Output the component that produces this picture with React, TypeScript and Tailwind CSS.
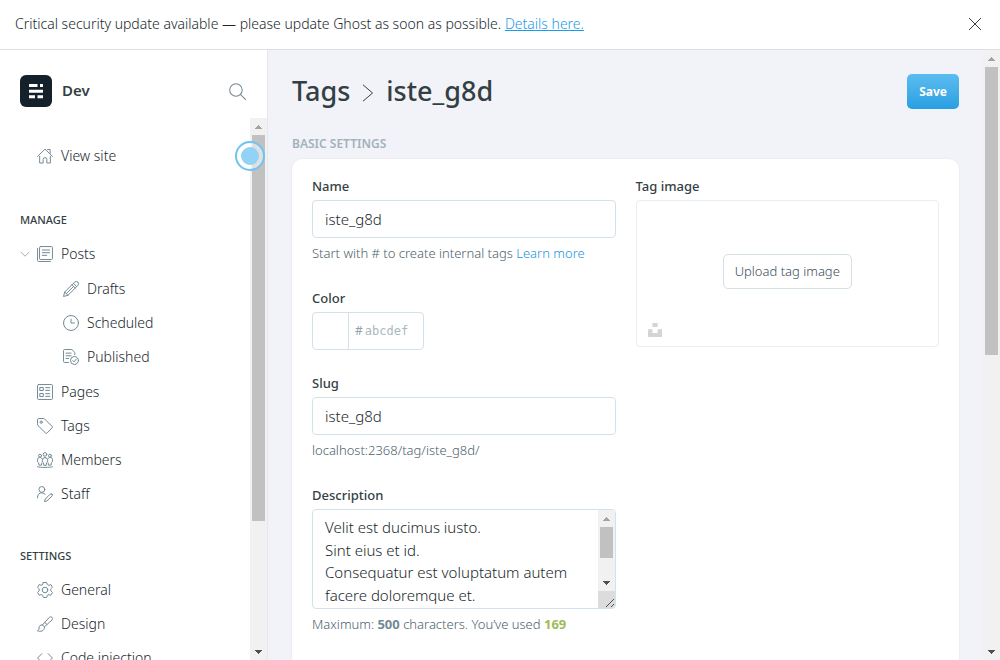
import React from 'react';
import type { ReactNode } from 'react';

function Icon({ children, className = 'size-4' }: { children: ReactNode; className?: string }) {
  return (
    <svg
      viewBox="0 0 24 24"
      fill="none"
      stroke="currentColor"
      strokeWidth="1.5"
      strokeLinecap="round"
      strokeLinejoin="round"
      aria-hidden="true"
      className={`shrink-0 text-[#738a94] ${className}`}
    >
      {children}
    </svg>
  );
}

const icons = {
  home: (
    <>
      <path d="M0.8 12.8 12 1.6l11.2 11.2" />
      <path d="M4 12.5v10h5.2v-5.2a2.8 2.8 0 0 1 5.6 0v5.2H20v-10" />
      <path d="M15.8 2.2h3.9v6" />
    </>
  ),
  posts: (
    <>
      <rect x="3.8" y="0.8" width="19.4" height="19.4" rx="1.5" />
      <path d="M0.8 3.8v17.9a1.5 1.5 0 0 0 1.5 1.5h17.9" />
      <path d="M8 6h11M8 10h11M8 14h6.5" />
    </>
  ),
  pencil: (
    <>
      <path d="M22.2 1.8a3.4 3.4 0 0 0-4.9 0L2.6 16.5 0.8 23.2l6.7-1.8L22.2 6.7a3.4 3.4 0 0 0 0-4.9Z" />
      <path d="m15.6 3.5 4.9 4.9M13.4 5.7l4.9 4.9M2.6 16.5l4.9 4.9M5 18.9 16 8" />
    </>
  ),
  clock: (
    <>
      <circle cx="12" cy="12" r="11.2" />
      <path d="M12 6.2V12h5" />
    </>
  ),
  published: (
    <>
      <path d="M8.3 20.2H2.3a1.5 1.5 0 0 1-1.5-1.5V2.3A1.5 1.5 0 0 1 2.3.8h11l4.4 4.4v3.2" />
      <path d="M4.6 6.2h7.5M4.6 10.2h7.5M4.6 14.2h4" />
      <circle cx="17.2" cy="17.2" r="6" />
      <path d="m14.6 17.4 1.9 1.9 3.4-4.2" />
    </>
  ),
  pages: (
    <>
      <rect x="0.8" y="0.8" width="22.4" height="22.4" rx="1.5" />
      <rect x="4.8" y="5.2" width="4.6" height="4.6" />
      <rect x="4.8" y="14.2" width="4.6" height="4.6" />
      <path d="M13 5.5h6.2M13 9.5h6.2M13 14.5h6.2M13 18.5h6.2" />
    </>
  ),
  tag: (
    <>
      <path d="M.8 2.3A1.5 1.5 0 0 1 2.3.8h7.3a3 3 0 0 1 2.1.9l11 11a1.5 1.5 0 0 1 0 2.1l-7.6 7.8a1.5 1.5 0 0 1-2.1 0l-11.3-11A3 3 0 0 1 .8 9.4Z" />
      <circle cx="6.3" cy="6.3" r="1.7" />
    </>
  ),
  members: (
    <>
      <circle cx="12" cy="3.6" r="2.7" />
      <circle cx="4.6" cy="5.6" r="2.2" />
      <circle cx="19.4" cy="5.6" r="2.2" />
      <path d="M12 8.3a3.9 3.9 0 0 0-3.9 3.9v2.6l1.6 1.2.5 4.1h3.6l.5-4.1 1.6-1.2v-2.6A3.9 3.9 0 0 0 12 8.3Z" />
      <path d="M7.4 9.9a3.5 3.5 0 0 0-6.6 1.8v3l1.6 1.4.5 3.6h3.9l.4-3.2" />
      <path d="M16.6 9.9a3.5 3.5 0 0 1 6.6 1.8v3l-1.6 1.4-.5 3.6h-3.9l-.4-3.2" />
      <path d="M.8 22.2c3.4 1.3 19 1.3 22.4 0" />
    </>
  ),
  staff: (
    <>
      <circle cx="7.3" cy="5.2" r="4.4" />
      <path d="M.8 17.8v-1.3a6.5 6.5 0 0 1 11.4-4.2" />
      <path d="M22.6 12.3a2.1 2.1 0 0 0-3 0l-7.3 7.4-1.1 3.6 3.7-.8 7.5-7.3a2.1 2.1 0 0 0 .2-2.9Z" />
    </>
  ),
  gear: (
    <>
      <path d="M9.4.8h5.2l.7 2.7a2.2 2.2 0 0 0 2.9 1.3l2.5-1 2.4 4-1.8 2.1a2.6 2.6 0 0 0 0 3.8l1.8 2.1-2.4 4.1-2.5-.8a2.2 2.2 0 0 0-2.9 1.4l-.7 2.7H9.4l-.7-2.7a2.2 2.2 0 0 0-2.9-1.4l-2.5.8-2.4-4.1 1.8-2.1a2.6 2.6 0 0 0 0-3.8L.9 7.8l2.4-4 2.5 1a2.2 2.2 0 0 0 2.9-1.3Z" />
      <circle cx="12" cy="12" r="4.2" />
    </>
  ),
  brush: (
    <>
      <path d="M8.2 13.4 18.6 2a2.7 2.7 0 0 1 4 3.8L11.2 16.3" />
      <path d="M8.2 13.4c-3.6-.5-5.3 1.7-5.1 4.6.1 2.3-.8 3.3-2.3 4.2 4 1.6 10.3 1.2 10.4-5.9l-3-2.9Z" />
      <path d="m11.6 9.7 3.2 3" />
    </>
  ),
  code: <path d="m7.3 5.5-6.5 6.5 6.5 6.5M16.7 5.5l6.5 6.5-6.5 6.5" />,
};

type IconName = keyof typeof icons;

function NavItem({ icon, label, sub = false, children }: { icon: IconName; label: string; sub?: boolean; children?: ReactNode }) {
  return (
    <li className={`flex h-[34px] items-center ${sub ? 'pl-[63px]' : children ? 'pl-5' : 'pl-[37px]'}`}>
      {children}
      <a href="#" className="flex items-center gap-2 text-sm font-light text-[#20282d]">
        <Icon>{icons[icon]}</Icon>
        {label}
      </a>
    </li>
  );
}

function NavHeading({ children }: { children: ReactNode }) {
  return <h2 className="mb-[7px] pl-5 text-[11px] leading-5 font-medium text-[#343f44] uppercase">{children}</h2>;
}

function Arrow({ down = false }: { down?: boolean }) {
  return (
    <div className="flex h-[17px] shrink-0 items-center justify-center">
      <svg viewBox="0 0 7 4" aria-hidden="true" shapeRendering="crispEdges" className={`h-1 w-[7px] ${down ? 'text-[#505050]' : 'text-[#a3a3a3]'}`}>
        <path fill="currentColor" d={down ? 'M0 0h7L3.5 4Z' : 'M0 4h7L3.5 0Z'} />
      </svg>
    </div>
  );
}

function Scrollbar({ thumb, className = '' }: { thumb: string; className?: string }) {
  return (
    <div aria-hidden="true" className={`flex w-[17px] shrink-0 flex-col bg-[#f1f1f1] ${className}`}>
      <Arrow />
      <div className="min-h-0 flex-1 px-[2px]">
        <div className={`bg-[#c1c1c1] ${thumb}`} />
      </div>
      <Arrow down />
    </div>
  );
}

function Sidebar() {
  return (
    <aside className="flex w-[268px] shrink-0 flex-col border-r border-[#e5e9ed] bg-white">
      <div className="flex h-[68px] shrink-0 items-center pt-[14px] pr-[21px] pl-5">
        <svg viewBox="0 0 32 32" className="size-8" aria-hidden="true">
          <rect width="32" height="32" rx="6" fill="#15212a" />
          <path fill="#fff" d="M9 9h8.5v3H9zM20 9h3v3h-3zM9 14.7h14v3H9zM9 20.3h6v3H9zM17.5 20.3H23v3h-5.5z" />
        </svg>
        <span className="ml-[10px] flex-1 pb-0.5 text-[15px] font-semibold text-[#343f44]">Dev</span>
        <button type="button" aria-label="Search">
          <Icon className="size-[17px]">
            <circle cx="9.8" cy="9.8" r="8.8" />
            <path d="m16 16 7.2 7.2" />
          </Icon>
        </button>
      </div>
      <div className="relative flex min-h-0 flex-1">
        <nav className="min-w-0 flex-1 overflow-y-auto pt-[21px] [scrollbar-width:none]">
          <ul className="mb-[37px]">
            <NavItem icon="home" label="View site" />
          </ul>
          <NavHeading>Manage</NavHeading>
          <ul>
            <NavItem icon="posts" label="Posts">
              <button type="button" aria-label="Collapse posts" className="mr-[7px]">
                <svg viewBox="0 0 10 10" fill="none" stroke="#9bb0bb" strokeWidth="1" className="size-[10px]" aria-hidden="true">
                  <path d="m.7 3 4.3 4.2L9.3 3" />
                </svg>
              </button>
            </NavItem>
            <li>
              <ul className="my-px">
                <NavItem sub icon="pencil" label="Drafts" />
                <NavItem sub icon="clock" label="Scheduled" />
                <NavItem sub icon="published" label="Published" />
              </ul>
            </li>
            <NavItem icon="pages" label="Pages" />
            <NavItem icon="tag" label="Tags" />
            <NavItem icon="members" label="Members" />
            <NavItem icon="staff" label="Staff" />
          </ul>
          <div className="mt-[35px]">
            <NavHeading>Settings</NavHeading>
            <ul>
              <NavItem icon="gear" label="General" />
              <NavItem icon="brush" label="Design" />
              <NavItem icon="code" label="Code injection" />
            </ul>
          </div>
        </nav>
        <Scrollbar thumb="h-[76%]" />
        <button
          type="button"
          aria-label="Show tip"
          className="absolute top-[23px] right-[2px] flex size-[30px] items-center justify-center rounded-full border-2 border-[#6ec4f1] bg-white/50"
        >
          <span className="size-[18px] rounded-full bg-[#92d2f6]" />
        </button>
      </div>
    </aside>
  );
}

const labelClass = 'mb-1 block text-[13px] leading-5 font-medium text-[#343f44]';
const helpClass = 'mt-1 text-[13px] leading-[23px] font-light text-[#4d626c]';
const inputClass = 'block h-[38px] w-full rounded-[4px] border border-[#d3e2ea] bg-white px-3 text-[15px] font-light text-[#20282d] outline-none';

function TagForm() {
  return (
    <form className="grid grid-cols-2 gap-5 rounded-[10px] bg-white px-5 pt-[17px] pb-16 shadow-[0_0_2px_rgba(0,0,0,0.08)]">
      <div className="flex min-w-0 flex-col gap-[23px]">
        <div>
          <label htmlFor="name" className={labelClass}>Name</label>
          <input id="name" defaultValue="iste_g8d" className={inputClass} />
          <p className={helpClass}>
            Start with # to create internal tags <a href="#" className="text-[#1b94e0]">Learn more</a>
          </p>
        </div>
        <div>
          <label htmlFor="color" className={labelClass}>Color</label>
          <div className="flex h-[38px] w-28 items-center overflow-hidden rounded-[4px] border border-[#d3e2ea]">
            <span className="h-full w-9 shrink-0 border-r border-[#d3e2ea]" />
            <span className="pl-[6px] text-xs text-[#8fa3ad]">#</span>
            <input
              id="color"
              placeholder="abcdef"
              className="min-w-0 flex-1 pl-[2px] font-['DejaVu_Sans_Mono',monospace] text-xs outline-none placeholder:text-[#a9b9c1]"
            />
          </div>
        </div>
        <div>
          <label htmlFor="slug" className={labelClass}>Slug</label>
          <input id="slug" defaultValue="iste_g8d" className={inputClass} />
          <p className={helpClass}>localhost:2368/tag/iste_g8d/</p>
        </div>
        <div>
          <label htmlFor="description" className={labelClass}>Description</label>
          <div className="flex h-[100px] overflow-hidden rounded-[4px] border border-[#d3e2ea]">
            <textarea
              id="description"
              className="min-w-0 flex-1 resize-none px-3 py-[6px] text-[15px] leading-normal font-light text-[#20282d] outline-none [scrollbar-width:none]"
              defaultValue={'Velit est ducimus iusto.\nSint eius et id.\nConsequatur est voluptatum autem facere doloremque et.\nVoluptatem quia nihil. Et rerum sit quo dolores. Quia et illum.'}
            />
            <div className="flex flex-col">
              <Scrollbar thumb="h-[31px]" className="flex-1" />
              <svg viewBox="0 0 17 17" className="size-[17px] bg-[#dcdcdc]" stroke="#505050" aria-hidden="true">
                <path d="m8 16 8-8M13 16l3-3" />
              </svg>
            </div>
          </div>
          <p className={helpClass}>
            Maximum: <b className="font-bold text-[#738a94]">500</b> characters. You’ve used <b className="font-bold text-[#9fbb58]">169</b>
          </p>
        </div>
      </div>
      <div className="min-w-0">
        <h3 className={labelClass}>Tag image</h3>
        <div className="relative flex h-[147px] items-center justify-center rounded-[4px] border border-[#e5eff5] pb-1">
          <button type="button" className="h-[35px] rounded-[5px] border border-[#d3e0e6] px-[11px] text-[13px] font-light text-[#3c5059]">
            Upload tag image
          </button>
          <button type="button" aria-label="Choose from Unsplash" className="absolute bottom-[9px] left-[11px]">
            <svg viewBox="0 0 14 14" className="size-[14px]" aria-hidden="true">
              <path fill="#d4d4d4" d="M4.4 0h5.2v4H4.4zM0 6.2h4.4v3.9h5.2V6.2H14V14H0z" />
            </svg>
          </button>
        </div>
      </div>
    </form>
  );
}

export default function App() {
  return (
    <div className="flex h-screen flex-col overflow-hidden bg-white font-['Noto_Sans',sans-serif]">
      <div className="flex h-[50px] shrink-0 items-center justify-between border-b border-[#dddfe2] pr-[18px] pb-px pl-[15px] text-sm font-light text-[#20282d]">
        <p>
          Critical security update available — please update Ghost as soon as possible.{' '}
          <a href="#" className="text-[#1b9ce8] underline">Details here.</a>
        </p>
        <button type="button" aria-label="Close">
          <svg viewBox="0 0 14 14" className="size-[14px]" fill="none" stroke="#394047" strokeWidth="1" aria-hidden="true">
            <path d="m1 1 12 12M13 1 1 13" />
          </svg>
        </button>
      </div>
      <div className="flex min-h-0 flex-1">
        <Sidebar />
        <main className="min-w-0 flex-1 overflow-y-auto bg-[#f1f3f8] px-6 pt-6 [scrollbar-width:none]">
          <header className="flex h-[35px] items-center justify-between">
            <h1 className="flex items-center text-[27px] font-medium text-[#343f44]">
              <a href="#">Tags</a>
              <svg viewBox="0 0 12 18" className="mx-3 mt-0.5 h-[18px] w-3" fill="none" stroke="currentColor" strokeWidth="1" aria-hidden="true">
                <path d="m1 .8 9.5 8.2L1 17.2" />
              </svg>
              iste_g8d
            </h1>
            <button type="button" className="h-[35px] rounded-[5px] bg-linear-to-b from-[#5bbcf0] to-[#279fe2] px-3 text-xs font-bold text-white">
              Save
            </button>
          </header>
          <h2 className="mt-[25px] mb-[5px] text-xs leading-5 font-semibold text-[#a1b2bb] uppercase">Basic settings</h2>
          <TagForm />
        </main>
        <Scrollbar thumb="h-1/2" />
      </div>
    </div>
  );
}
